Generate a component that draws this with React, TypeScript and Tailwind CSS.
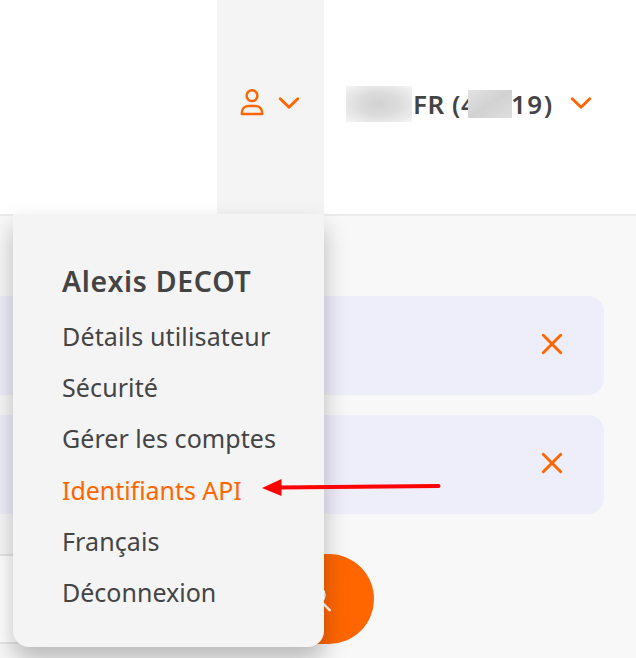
import React from "react";

function Chevron() {
  return (
    <svg width="22" height="14" viewBox="0 0 22 14" fill="none" stroke="#ff6600" strokeWidth="2.9" strokeLinecap="round" strokeLinejoin="round">
      <path d="M2.2 2.7 11 11.2l8.8-8.5" />
    </svg>
  );
}

function UserIcon() {
  return (
    <svg width="26" height="28" viewBox="0 0 26 28" fill="none" stroke="#ff6600" strokeWidth="2.5" strokeLinejoin="round">
      <circle cx="13" cy="7.7" r="5.4" />
      <path d="M2.9 26V24.6C2.9 20.6 6 17.9 10 17.9H16C20 17.9 23.1 20.6 23.1 24.6V26Z" />
    </svg>
  );
}

function Notice() {
  return (
    <div className="flex h-[99px] w-[604px] items-center justify-end rounded-r-[16px] bg-[#eeedfa] pr-[41px] pb-[3px]">
      <svg width="22" height="22" viewBox="0 0 22 22" fill="none" stroke="#ff6600" strokeWidth="2.9" strokeLinecap="round">
        <path d="M2.3 2.3 19.7 19.7M19.7 2.3 2.3 19.7" />
      </svg>
    </div>
  );
}

const items = [
  { label: "Détails utilisateur", style: "tracking-[0.15px]" },
  { label: "Sécurité", style: "tracking-[0.1px]" },
  { label: "Gérer les comptes", style: "tracking-[0.05px]" },
  { label: "Identifiants API", style: "tracking-[-0.05px] text-[#ff6600]" },
  { label: "Français", style: "tracking-[0.1px]" },
  { label: "Déconnexion", style: "tracking-[0px]" },
];

export default function App() {
  return (
    <div className="relative h-[658px] w-[636px] overflow-hidden bg-[#f8f8f8] font-['Noto_Sans',sans-serif] text-[#444444]">
      <header className="flex h-[216px] border-b-2 border-[#ececec] bg-white pl-[217px]">
        <div className="flex w-[107px] justify-center bg-[#f4f4f4] pt-[88px]">
          <div className="flex h-[28px] items-center gap-[13px] pr-[3px]">
            <UserIcon />
            <div className="pt-[2px]"><Chevron /></div>
          </div>
        </div>
        <div className="mt-[86px] flex h-[36px] items-center pl-[22px]">
          <span className="h-[36px] w-[66px] bg-[radial-gradient(ellipse_at_center,#d2d2d2_0%,#dcdcdc_45%,#f5f5f5_100%)]" />
          <span className="ml-[1px] w-[55px] whitespace-nowrap text-[26px] leading-[36px] font-semibold tracking-[0.5px]">FR (4</span>
          <span className="z-10 h-[28px] w-[44px] bg-linear-to-br from-[#e2e2e2] via-[#d2d2d2] to-[#dedede]" />
          <span className="-ml-px w-[58px] whitespace-nowrap text-[26px] leading-[36px] font-semibold tracking-[1.5px]">19)</span>
          <div className="-mt-[2px] ml-px"><Chevron /></div>
        </div>
      </header>

      <main className="pt-[80px]">
        <div className="flex flex-col gap-[20px]">
          <Notice />
          <Notice />
        </div>
        <div className="mt-[40px] flex h-[90px] w-[374px]">
          <div className="h-[90px] flex-1 border-y-2 border-[#e6e6e6] bg-white" />
          <div className="flex w-[90px] items-center justify-center rounded-r-full bg-[#ff6600]">
            <svg width="26" height="26" viewBox="0 0 26 26" fill="none" stroke="white" strokeWidth="2.4" strokeLinecap="round" className="mr-[23px]">
              <circle cx="10.5" cy="9" r="9" />
              <path d="m16.7 16.2 8 8" />
            </svg>
          </div>
        </div>
      </main>

      <nav className="absolute top-[214px] left-[13px] h-[433px] w-[311px] rounded-b-[16px] bg-[#f4f4f4] pt-[47px] pl-[49px] shadow-[0_13px_24px_rgba(0,0,0,0.26)]">
        <h2 className="h-[50px] whitespace-nowrap text-[28.5px] leading-[40px] font-semibold tracking-[0.7px]">Alexis DECOT</h2>
        <ul>
          {items.map((item) => (
            <li key={item.label} className="h-[51.2px] whitespace-nowrap text-[25px] leading-[51.2px]">
              <span className={item.style}>{item.label}</span>
            </li>
          ))}
        </ul>
      </nav>

      <svg className="absolute top-[476px] left-[260px]" width="184" height="24" viewBox="0 0 184 24">
        <path d="M18 11.4 178.5 9.9" stroke="#ff0000" strokeWidth="4" strokeLinecap="round" />
        <path d="M2 12 21.5 3V20Z" fill="#ff0000" />
      </svg>
    </div>
  );
}
